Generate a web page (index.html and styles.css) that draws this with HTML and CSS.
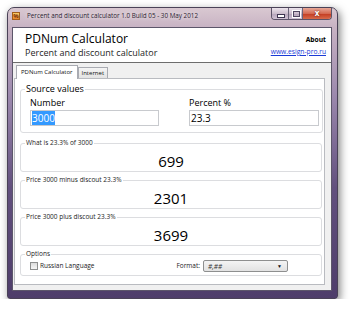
FILE: index.html
```html
<!DOCTYPE html>
<html>
<head>
<meta charset="utf-8">
<title>PDNum Calculator</title>
<link rel="stylesheet" href="styles.css">
</head>
<body>
<div class="window">
	<div class="titlebar">
		<span class="app-icon">%</span>
		<span class="title">Percent and discount calculator 1.0 Build 05 - 30 May 2012</span>
		<div class="caption">
			<span class="cbtn min"></span>
			<span class="cbtn max"></span>
			<span class="cbtn close">x</span>
		</div>
	</div>

	<div class="client">
		<div class="header">
			<div class="brand">
				<div class="name">PDNum Calculator</div>
				<div class="sub">Percent and discount calculator</div>
			</div>
			<div class="links">
				<a class="about">About</a>
				<a class="site" href="#">www.esign-pro.ru</a>
			</div>
		</div>

		<div class="tabs-area">
			<div class="tabs">
				<span class="tab active">PDNum Calculator</span>
				<span class="tab">Internet</span>
			</div>
			<div class="panel">
				<fieldset class="group source">
					<legend>Source values</legend>
					<div class="fields">
						<div class="field">
							<div class="lbl">Number</div>
							<div class="input"><span class="sel">3000</span></div>
						</div>
						<div class="field">
							<div class="lbl">Percent %</div>
							<div class="input">23.3</div>
						</div>
					</div>
				</fieldset>

				<fieldset class="group result">
					<legend>What is 23.3% of 3000</legend>
					<div class="value">699</div>
				</fieldset>
				<fieldset class="group result">
					<legend>Price 3000 minus discout 23.3%</legend>
					<div class="value">2301</div>
				</fieldset>
				<fieldset class="group result">
					<legend>Price 3000 plus discout 23.3%</legend>
					<div class="value">3699</div>
				</fieldset>

				<fieldset class="group options">
					<legend>Options</legend>
					<div class="opt-row">
						<span class="check"></span>
						<span class="opt-lbl">Russian Language</span>
						<div class="format">
							<span class="opt-lbl">Format:</span>
							<div class="select"><span class="sel-text">#,##</span><span class="arrow">&#9660;</span></div>
						</div>
					</div>
				</fieldset>
			</div>
		</div>
	</div>
</div>
</body>
</html>
```

FILE: styles.css
```css
*{ margin:0; padding:0; box-sizing:border-box;}
body{ background:#fff; font-family:"Open Sans","Noto Sans",Arial,sans-serif; color:#000;}

/* window frame */
.window{ width:331px; height:292px; margin:7px 0 0 7px; border:1px solid #4a4257; border-radius:7px 7px 3px 3px; padding:0 5px 7px 4px; display:flex; flex-direction:column;
	background:linear-gradient(to bottom, #d9c8d1 0, #c7b2c3 20px, #9a87ac 90px, #62507e 180px, #4e3d6a 100%);
	box-shadow:2px 3px 8px rgba(0,0,0,.5);}
.titlebar{ height:19px; display:flex; align-items:flex-start;}
.app-icon{ width:8px; height:8px; margin-top:4px; border:1px solid #a25e1c; background:linear-gradient(#f9cf6a,#e5822a); color:#7a2e08; font-size:6px; line-height:6px; text-align:center; font-weight:bold;}
.title{ margin:2px 0 0 7px; font-size:6.3px; line-height:12px; color:#2b2230; text-shadow:0 0 4px #fff;}
.caption{ margin-left:auto; display:flex; height:12px; border:1px solid #5b5468; border-top:none; border-radius:0 0 4px 4px; overflow:hidden;}
.cbtn{ display:block; height:11px; position:relative; background:linear-gradient(#ece4ec,#cbbdcc 50%,#b4a4b9 51%,#cfc1d3);}
.cbtn.min{ width:17px; border-right:1px solid #6a6378;}
.cbtn.min:after{ content:""; position:absolute; left:5px; top:6px; width:6px; height:2px; background:#fff; border:1px solid #3d3550;}
.cbtn.max{ width:14px; border-right:1px solid #6a6378;}
.cbtn.max:after{ content:""; position:absolute; left:3px; top:2px; width:7px; height:6px; border:1px solid #fff; outline:1px solid #4f4760; outline-offset:-2px;}
.cbtn.close{ width:28px; background:linear-gradient(#e8a898,#d56a52 50%,#c23a20 51%,#d86a4a); color:#fff; font-size:8px; line-height:10px; text-align:center; font-weight:bold; text-shadow:0 0 2px #5a1000;}

/* client area */
.client{ flex:1; display:flex; flex-direction:column; border:1px solid #5c566a; background:#f0f0f0;}
.header{ height:35px; background:#fff; border-bottom:1px solid #6d6d6d; display:flex; justify-content:space-between; padding:4px 5px 0 12px;}
.name{ font-size:12px; line-height:13px; color:#000;}
.sub{ font-size:9px; line-height:11px; margin-top:2px; color:#1e1e1e;}
.links{ display:flex; flex-direction:column; align-items:flex-end; padding-top:3px;}
.about{ font-size:6.7px; font-weight:bold; line-height:10px; color:#000;}
.site{ font-size:6.7px; line-height:10px; margin-top:2px; color:#1a3bd6; text-decoration:underline;}

/* tabs */
.tabs-area{ flex:1; display:flex; flex-direction:column; padding:2px 6px 5px 1px;}
.tabs{ display:flex; align-items:flex-end; height:13px; padding-left:2px;}
.tab{ font-size:6px; line-height:10px; height:11px; padding:0 3px; border:1px solid #a9abb2; border-bottom:none; background:linear-gradient(#f4f4f4,#e3e3e3); color:#111; white-space:nowrap;}
.tab.active{ height:14px; line-height:12px; background:#fff; margin-bottom:-1px; position:relative; z-index:1; padding:0 4px;}
.panel{ flex:1; background:#fff; border:1px solid #b9bbc0; padding:3px 2px 0 5px;}

/* group boxes */
.group{ border:1px solid #dcdde0; border-radius:3px;}
.group legend{ font-size:6.5px; line-height:8px; padding:0 1px; margin-left:4px; color:#222;}
.source{ padding:1px 3px 6px 9px;}
.source legend{ font-size:9px; line-height:14px; margin-left:-5px; color:#000;}
.fields{ display:grid; grid-template-columns:129px 130px; column-gap:30px;}
.lbl{ font-size:9px; line-height:12px; margin-bottom:1px;}
.input{ height:16px; border:1px solid #c8cace; padding:0 1px; font-size:10px; line-height:14px; color:#000;}
.sel{ background:#3399ff; color:#fff;}

.result{ margin-top:4px; padding:4px 0 0 0;}
.source + .result{ margin-top:6px;}
.value{ font-size:15px; line-height:20px; text-align:center;}

.options{ margin-top:4px; padding:2px 33px 3px 9px;}
.options legend{ margin-left:-5px;}
.opt-row{ display:flex; align-items:center; height:12px;}
.check{ width:8px; height:8px; border:1px solid #8e8f8f; background:linear-gradient(#dcdcdc,#f6f6f6); margin-right:2px;}
.opt-lbl{ font-size:6.5px; line-height:10px; color:#222;}
.format{ margin-left:auto; display:flex; align-items:center;}
.select{ width:85px; height:12px; margin-left:3px; border:1px solid #8e8f8f; border-radius:2px; background:linear-gradient(#f4f4f4,#e2e2e2); display:flex; align-items:center; padding:0 5px 0 4px;}
.sel-text{ font-size:6.5px; font-style:italic; color:#333;}
.arrow{ margin-left:auto; font-size:5px; color:#111;}
```
